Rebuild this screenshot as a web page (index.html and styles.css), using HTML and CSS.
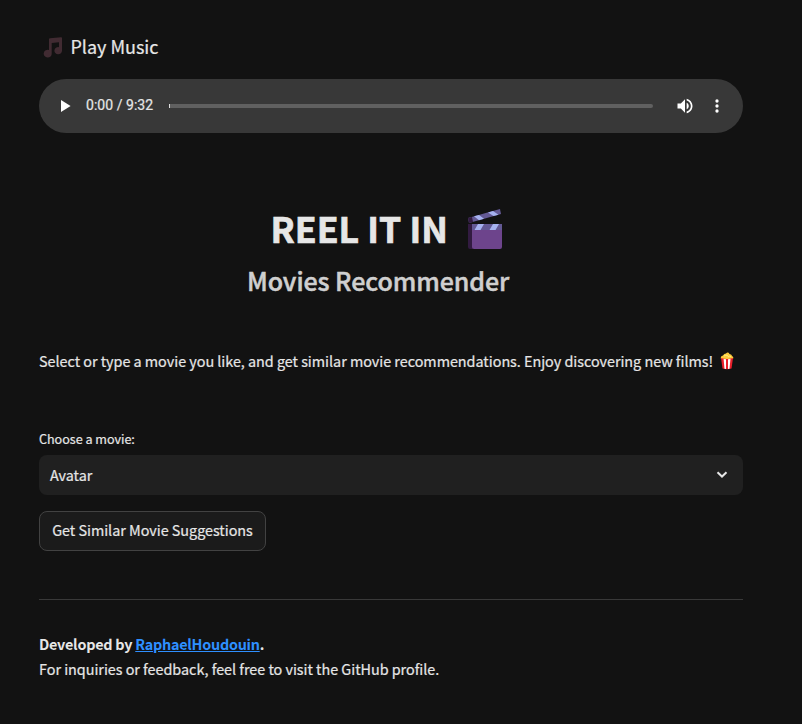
FILE: index.html
```html
<!DOCTYPE html>
<html lang="en">
<head>
<meta charset="utf-8">
<title>Reel It In</title>
<link rel="stylesheet" href="styles.css">
</head>
<body>
<main class="page">
  <h3 class="music-title">
    <svg class="note" viewBox="0 0 20 21" width="20" height="21" fill="#412b32"><path d="M6 2.2Q6 1.4 7 1.2L18 .2Q19 .1 19 1V13.5A3.8 3.6 0 1 1 16 10.2V5.2L8.7 6V16.4A4 3.9 0 1 1 6 13Z"/></svg>
    <span>Play Music</span>
  </h3>
  <div class="player">
    <svg class="play" viewBox="0 0 10 12" width="10" height="12"><path d="M0 0V12L9.6 6Z" fill="#fff"/></svg>
    <span class="time">0:00 / 9:32</span>
    <div class="track"></div>
    <svg class="volume" viewBox="0 0 24 24" width="20" height="20" fill="#fff"><path d="M3 9v6h4l5 5V4L7 9H3zm13.5 3c0-1.77-1.02-3.29-2.5-4.03v8.05c1.48-.73 2.5-2.25 2.5-4.02zM14 3.23v2.06c2.89.86 5 3.54 5 6.71s-2.11 5.85-5 6.71v2.06c4.01-.91 7-4.49 7-8.77s-2.99-7.86-7-8.77z"/></svg>
    <svg class="more" viewBox="0 0 24 24" width="20" height="20" fill="#fff"><circle cx="12" cy="6" r="2"/><circle cx="12" cy="12" r="2"/><circle cx="12" cy="18" r="2"/></svg>
  </div>
  <header class="hero">
    <h1 class="title"><span>REEL IT IN</span>
      <svg class="clapper" viewBox="0 0 36 42" width="36" height="42">
        <path d="M1 10 33 1 34 6 2 15Z" fill="#635994"/>
        <path d="M1 10 5 9 6 14 2 15Z" fill="#321b41"/>
        <path d="M7 8.3 12 6.9 17 10.8 12 12.2ZM21 4.4 26 3 31.5 6.7 26.5 8.1Z" fill="#a6b2ef"/>
        <path d="M1 16H6V41H3Q1 41 1 39Z" fill="#321b41"/>
        <path d="M5 16H35V39Q35 41 33 41H7Q5 41 5 39Z" fill="#6d448c"/>
        <path d="M5 16H35V22H5Z" fill="#635994"/>
        <path d="M11 16H17L13.500 22H7.500ZM26 16H32L28.500 22H22.500Z" fill="#a6b2ef"/>
      </svg>
    </h1>
    <h2 class="subtitle">Movies Recommender</h2>
  </header>
  <p class="intro"><span>Select or type a movie you like, and get similar movie recommendations. Enjoy discovering new films!</span>
    <svg class="popcorn" viewBox="0 0 14 18" width="14" height="18">
      <path d="M1 7Q0 4 3 3.500Q4 1.500 6 1.500Q8-.5 9.500 2Q12 2.500 12 4Q14 5 13 7Z" fill="#fccb3c"/>
      <path d="M4 4Q6 2 8 4M8 5Q10 3 11 5" stroke="#fff07a" fill="none"/>
      <path d="M1 6 2.500 16.500Q7 18 11.500 16.500L13 6Q7 8 1 6Z" fill="#e9202b"/>
      <path d="M3.600 7 4.500 16.800 6 17V7.200ZM8 7.200V17L9.500 16.800 10.500 7Z" fill="#fff"/>
    </svg>
  </p>
  <label class="label">Choose a movie:</label>
  <div class="select"><span>Avatar</span>
    <svg viewBox="0 0 12 8" width="12" height="8"><path d="M1.500 1.200 6 5.500 10.500 1.200" fill="none" stroke="#e6e6e6" stroke-width="2"/></svg>
  </div>
  <button class="button">Get Similar Movie Suggestions</button>
  <hr class="rule">
  <footer class="footer">
    <div class="credit">Developed by <a href="#">RaphaelHoudouin</a>.</div>
    <div class="contact">For inquiries or feedback, feel free to visit the GitHub profile.</div>
  </footer>
</main>
</body>
</html>
```
FILE: styles.css
```css
* { box-sizing: border-box; }
body {
  margin: 0;
  background: #121212;
  color: #e6e6e6;
  font: 14.4px/25px "Noto Sans CJK SC", "Noto Sans", sans-serif;
  letter-spacing: -0.03px;
  -webkit-text-stroke: 0.2px currentColor;
}
.page { width: 704px; height: 724px; margin-left: 39px; padding-top: 35px; }
h1, h2, h3, p { margin: 0; white-space: nowrap; }
svg { display: block; flex: none; -webkit-text-stroke: 0; }
.music-title { display: flex; align-items: center; height: 24px; padding-left: 4px; font-size: 18px; font-weight: 400; }
.music-title span { margin-left: 7.5px; padding-bottom: 2px; }
.player { display: flex; align-items: center; height: 54px; margin-top: 20px; padding-left: 22px; border-radius: 27px; background: #383838; }
.time { width: 68px; margin-left: 15px; padding-bottom: 2px; font: 14px/20px Roboto, sans-serif; letter-spacing: 0.04px; white-space: nowrap; }
.track { width: 484px; height: 4px; margin-left: 15px; border-left: 1px solid #ddd; border-radius: 0 2px 2px 0; background: #606060; }
.volume { margin-left: 22px; }
.more { margin-left: 12px; }
.hero { margin-top: 71px; }
.title { display: flex; align-items: center; height: 50px; padding-left: 231.500px; font-size: 35.6px; font-weight: 700; letter-spacing: 0.03px; -webkit-text-stroke-width: 0.7px; }
.title span { padding-bottom: 4px; }
.clapper { margin-left: 19px; margin-top: -1px; }
.subtitle { height: 40px; margin-top: 6px; padding-left: 208px; font-size: 25px; line-height: 40px; font-weight: 500; letter-spacing: -0.07px; -webkit-text-stroke-width: 0.5px; color: #cfcfcf; }
.intro { display: flex; align-items: center; height: 26px; margin-top: 48px; }
.intro span { padding-bottom: 2px; }
.popcorn { margin-left: 7px; }
.label { display: block; height: 20px; margin-top: 55px; font-size: 12.6px; line-height: 20px; letter-spacing: -0.03px; }
.select { display: flex; align-items: center; justify-content: space-between; height: 40px; margin-top: 6px; padding: 0 15px 0 11px; border-radius: 8px; background: #202020; }
.select span { padding-bottom: 1px; }
.button { display: block; width: 227px; height: 40px; margin-top: 16px; padding: 0 0 3px; border: 1px solid #424242; border-radius: 8px; background: #1b1b1b; color: inherit; font: inherit; letter-spacing: inherit; white-space: nowrap; }
.rule { height: 1px; margin: 48px 0 0; border: 0; background: #393939; }
.footer { margin-top: 31px; }
.credit { font-weight: 700; letter-spacing: -0.25px; -webkit-text-stroke-width: 0; }
.credit a { color: #2e8fff; text-decoration: underline; }
```
